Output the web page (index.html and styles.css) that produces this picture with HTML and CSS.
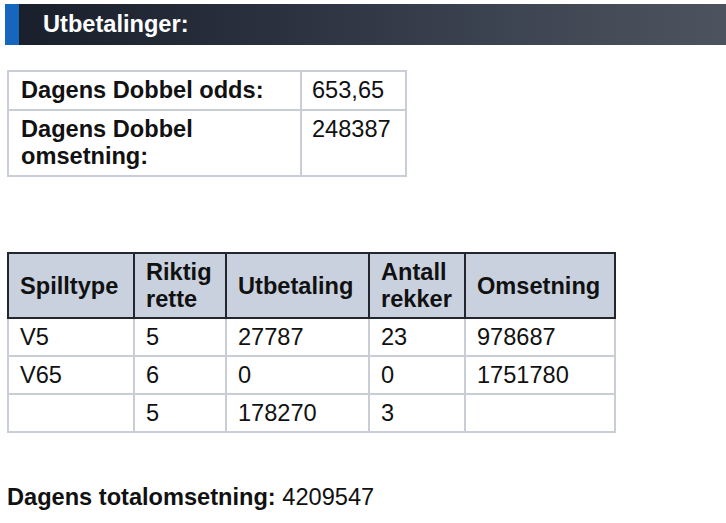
FILE: index.html
```html
<!DOCTYPE html>
<html lang="no">
<head>
<meta charset="utf-8">
<title>Utbetalinger</title>
<link rel="stylesheet" href="styles.css">
</head>
<body>
<div class="page">
  <h2 class="section-title"><span class="title-text">Utbetalinger:</span></h2>

  <table class="info-table">
    <colgroup><col class="info-label-col"><col class="info-value-col"></colgroup>
    <tr>
      <th scope="row">Dagens Dobbel odds:</th>
      <td>653,65</td>
    </tr>
    <tr>
      <th scope="row">Dagens Dobbel omsetning:</th>
      <td>248387</td>
    </tr>
  </table>

  <table class="result-table">
    <colgroup>
      <col class="c1"><col class="c2"><col class="c3"><col class="c4"><col class="c5">
    </colgroup>
    <thead>
      <tr>
        <th>Spilltype</th>
        <th>Riktig rette</th>
        <th>Utbetaling</th>
        <th>Antall rekker</th>
        <th>Omsetning</th>
      </tr>
    </thead>
    <tbody>
      <tr><td>V5</td><td>5</td><td>27787</td><td>23</td><td>978687</td></tr>
      <tr><td>V65</td><td>6</td><td>0</td><td>0</td><td>1751780</td></tr>
      <tr><td></td><td>5</td><td>178270</td><td>3</td><td></td></tr>
    </tbody>
  </table>

  <p class="total"><strong>Dagens totalomsetning:</strong> 4209547</p>
</div>
</body>
</html>
```

FILE: styles.css
```css
html, body {
  margin: 0;
  padding: 0;
  background: #ffffff;
}

body {
  font-family: "Liberation Sans", Arial, sans-serif;
  font-size: 23.6px;
  line-height: 27px;
  color: #111111;
}

.page {
  padding-top: 4px;
}

.section-title {
  margin: 0 0 0 5px;
  height: 41px;
  display: flex;
  align-items: center;
  border-left: 14px solid #1766bd;
  background: linear-gradient(to right, #1a1f2c 0%, #2a303d 35%, #3e4552 70%, #4d535e 100%);
  font-size: 23.6px;
  font-weight: bold;
  color: #ffffff;
}

.title-text {
  padding-left: 24px;
}

table {
  border-collapse: collapse;
  margin-left: 7px;
  table-layout: fixed;
}

.info-table {
  margin-top: 25px;
  width: 398px;
}

.info-label-col { width: 293px; }
.info-value-col { width: 105px; }

.info-table th,
.info-table td {
  border: 2px solid #c9cdd6;
  padding: 5px 10px 5px 12px;
  text-align: left;
  vertical-align: top;
}

.info-table th {
  font-weight: bold;
}

.info-table td {
  padding-left: 10px;
}

.result-table {
  margin-top: 75px;
  width: 607px;
}

.c1 { width: 126px; }
.c2 { width: 92px; }
.c3 { width: 143px; }
.c4 { width: 96px; }
.c5 { width: 150px; }

.result-table th {
  background: #c9d1df;
  border: 2px solid #23262e;
  font-weight: bold;
  text-align: left;
  vertical-align: middle;
  padding: 5px 8px 4px 11px;
}

.result-table td {
  border: 2px solid #c9cdd6;
  padding: 5px 10px 4px 11px;
  vertical-align: top;
  height: 27px;
}

.total {
  margin: 51px 0 0 7px;
}
```
